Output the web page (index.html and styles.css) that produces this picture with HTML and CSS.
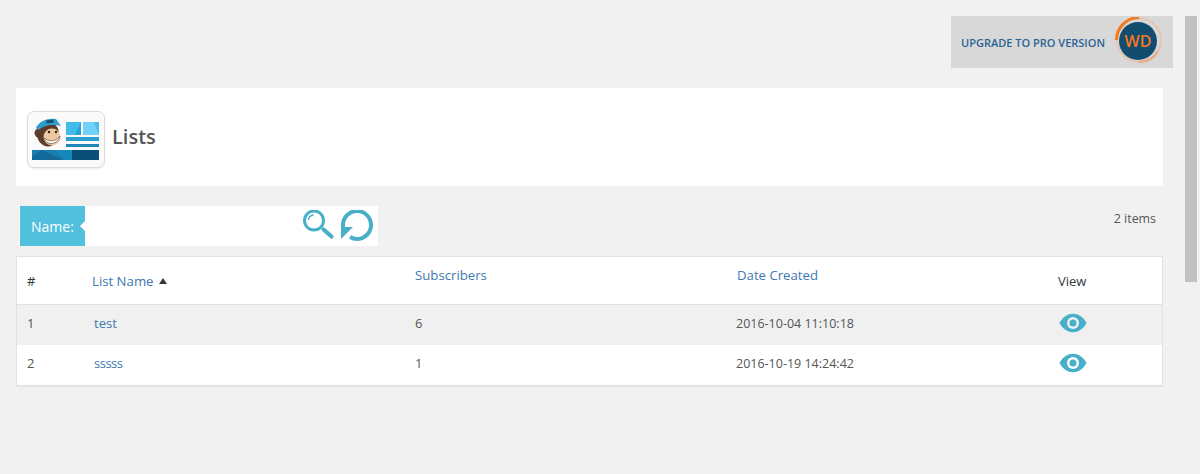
FILE: index.html
```html
<!DOCTYPE html>
<html lang="en">
<head>
<meta charset="utf-8">
<title>Lists</title>
<link rel="stylesheet" href="styles.css">
</head>
<body>
<div class="scroll-thumb"></div>
<main class="wrap">
  <div class="top">
    <a class="upgrade" href="#">
      <span class="upgrade-text">UPGRADE TO PRO VERSION</span>
      <span class="wd">
        <svg class="wd-ring" width="48" height="48" viewBox="0 0 48 48">
          <circle cx="25" cy="23" r="22" fill="none" stroke="#e5c5b2" stroke-width="2"/>
          <path d="M2.500 23A22.500 22.500 0 0 1 25 .5" fill="none" stroke="#f27a20" stroke-width="3"/>
          <path d="M25 45A22 22 0 0 0 44 34" fill="none" stroke="#e9a77f" stroke-width="2"/>
          <circle cx="24" cy="24" r="19" fill="#124c6e"/>
        </svg>
        <span class="wd-label">WD</span>
      </span>
    </a>
  </div>
  <header class="title-bar">
    <span class="logo">
      <svg width="76" height="55" viewBox="0 0 76 55">
        <rect x="4" y="38" width="67" height="10" fill="#1a7fb0"/>
        <path d="M44 38H71V48H44Z" fill="#0b4f78"/>
        <path d="M14 38L36 48H4V44Z" fill="#136a9a"/>
        <path d="M26 38H44V48H38Z" fill="#1689bb"/>
        <rect x="38" y="10" width="15" height="13" fill="#43bbe9"/>
        <path d="M53 10V23H47Z" fill="#2aa2d3"/>
        <rect x="55" y="10" width="16" height="13" fill="#71d1f7"/>
        <path d="M66 10H71V23Z" fill="#4fbde6"/>
        <rect x="38" y="25" width="33" height="4" fill="#2b9ed1"/>
        <rect x="38" y="32" width="33" height="3" fill="#1f86b8"/>
        <circle cx="11" cy="21" r="4.500" fill="#5d3c2b"/>
        <circle cx="11" cy="21" r="2" fill="#d9a97e"/>
        <ellipse cx="20" cy="22" rx="11" ry="12.500" fill="#5d3c2b"/>
        <ellipse cx="24" cy="25" rx="8.500" ry="8.500" fill="#ecc7a0"/>
        <path d="M16 26C21 30 28 30 32 24C31 32 19 35 16 26Z" fill="#fff" stroke="#5d3c2b" stroke-width=".6"/>
        <circle cx="21" cy="20" r="1.200" fill="#2c1c12"/>
        <circle cx="28" cy="20" r="1.200" fill="#2c1c12"/>
        <path d="M8 16C11 9 20 6 28 7L33 14C25 12 15 13 11 18Z" fill="#2f9ecf"/>
        <path d="M18 8.500L25 7.500L26 10.500L19 11.500Z" fill="#15506f"/>
      </svg>
    </span>
    <h1 class="title">Lists</h1>
  </header>
  <section class="tools">
    <form class="search">
      <label class="search-label">Name:</label>
      <span class="search-gap"></span>
      <svg class="ico-search" width="32" height="32" viewBox="0 0 32 32">
        <circle cx="11" cy="10.500" r="9.500" fill="none" stroke="#47afc9" stroke-width="3"/>
        <path d="M5.500 10A5.500 5.500 0 0 1 10.500 5" fill="none" stroke="#47afc9" stroke-width="1.400"/>
        <path d="M20.500 19.500L28.500 26.500" stroke="#47afc9" stroke-width="4.200" stroke-linecap="round"/>
      </svg>
      <svg class="ico-reset" width="33" height="32" viewBox="0 0 33 32">
        <path d="M2.200 17A14 14 0 1 1 9 27.100" fill="none" stroke="#47afc9" stroke-width="4"/>
        <path d="M0 17L12 17L0 29Z" fill="#47afc9"/>
      </svg>
    </form>
    <span class="count">2 items</span>
  </section>
  <table class="lists">
    <thead>
      <tr>
        <th class="c-num"><span class="th-plain">#</span></th>
        <th class="c-name"><a href="#">List Name</a><span class="sort"></span></th>
        <th class="c-subs"><a class="raised" href="#">Subscribers</a></th>
        <th class="c-date"><a class="raised nudge" href="#">Date Created</a></th>
        <th class="c-view"><span class="th-plain">View</span></th>
      </tr>
    </thead>
    <tbody>
      <tr class="alt">
        <td>1</td><td class="indent"><a href="#">test</a></td><td>6</td><td class="date">2016-10-04 11:10:18</td>
        <td><svg class="eye" width="28" height="20" viewBox="0 0 28 20"><path d="M.5 10C4 3.500 9 .8 14 .8S24 3.500 27.500 10C24 16.500 19 19.200 14 19.200S4 16.500 .5 10Z" fill="#47afc9"/><circle cx="14" cy="10" r="6" fill="#f0f0f0"/><circle cx="14" cy="10" r="3.500" fill="#47afc9"/></svg></td>
      </tr>
      <tr>
        <td>2</td><td class="indent"><a class="tight" href="#">sssss</a></td><td>1</td><td class="date">2016-10-19 14:24:42</td>
        <td><svg class="eye" width="28" height="20" viewBox="0 0 28 20"><path d="M.5 10C4 3.500 9 .8 14 .8S24 3.500 27.500 10C24 16.500 19 19.200 14 19.200S4 16.500 .5 10Z" fill="#47afc9"/><circle cx="14" cy="10" r="6" fill="#fff"/><circle cx="14" cy="10" r="3.500" fill="#47afc9"/></svg></td>
      </tr>
    </tbody>
  </table>
</main>
</body>
</html>
```

FILE: styles.css
```css
* { box-sizing: border-box; }
html, body { margin: 0; height: 474px; overflow: hidden; }
body {
  background: #f1f1f1;
  color: #444;
  font-family: "Open Sans", "Noto Sans", sans-serif;
  font-size: 13px;
  position: relative;
}
a { color: #3f78b0; text-decoration: none; }
.scroll-thumb {
  position: absolute;
  left: 1185px;
  top: 16px;
  width: 12px;
  height: 266px;
  background: #c1c1c1;
}
.wrap {
  width: 1163px;
  padding: 16px 0 0 16px;
}
.top {
  display: flex;
  justify-content: flex-end;
  margin-right: -10px;
}
.upgrade {
  display: flex;
  align-items: center;
  justify-content: space-between;
  width: 222px;
  height: 52px;
  padding: 0 10px;
  background: #d8d8d8;
}
.upgrade-text {
  color: #2a6496;
  font-size: 11px;
  font-weight: 600;
  white-space: nowrap;
}
.wd {
  position: relative;
  display: block;
  width: 48px;
  height: 48px;
  margin: -2px 1px 0 0;
}
.wd-ring { display: block; }
.wd-label {
  position: absolute;
  inset: 0;
  display: flex;
  align-items: center;
  justify-content: center;
  color: #f27a20;
  font-size: 16px;
  font-weight: 600;
}
.title-bar {
  display: flex;
  align-items: center;
  height: 98px;
  margin-top: 20px;
  padding-left: 11px;
  background: #fff;
}
.logo {
  display: block;
  width: 78px;
  height: 57px;
  margin-top: 4px;
  border: 1px solid #dcdcdc;
  border-radius: 7px;
  background: #fafafa;
  box-shadow: 0 1px 2px rgba(0, 0, 0, .08);
  overflow: hidden;
}
.logo svg { display: block; }
.title {
  margin: 0 0 0 7px;
  color: #555;
  font-size: 20px;
  font-weight: 600;
  line-height: 1;
}
.tools {
  display: flex;
  justify-content: space-between;
  align-items: flex-start;
  height: 50px;
  margin-top: 20px;
  padding: 0 7px 0 3px;
}
.count { padding-top: 4px; font-size: 12.4px; color: #555; }
.search {
  display: flex;
  align-items: center;
  width: 359px;
  height: 40px;
  padding-left: 1px;
  background: #fff;
}
.search-label {
  position: relative;
  display: flex;
  align-items: center;
  width: 65px;
  height: 40px;
  padding-left: 11px;
  background: #50c0dc;
  color: #fff;
  font-size: 14px;
}
.search-label::after {
  content: "";
  position: absolute;
  right: 0;
  top: 15px;
  border: 5px solid transparent;
  border-right-color: #fff;
  border-left-width: 0;
}
.search-gap { flex: 1; }
.ico-search { margin-right: 6px; }
.ico-reset { margin-right: 4px; }
.lists {
  width: 1147px;
  border-collapse: separate;
  border-spacing: 0;
  table-layout: fixed;
  background: #fff;
  border: 1px solid #e2e2e2;
  box-shadow: 0 1px 1px rgba(0, 0, 0, .04);
}
.lists th, .lists td {
  padding: 0 0 0 10px;
  text-align: left;
  font-weight: 400;
  font-size: 13px;
}
.lists th { height: 48px; border-bottom: 1px solid #e0e0e0; }
.lists td { height: 40px; padding-bottom: 4px; color: #555; }
.lists .alt { background: #f0f0f0; }
.c-num { width: 65px; }
.c-name { width: 323px; }
.c-subs { width: 321px; }
.c-date { width: 322px; }
.lists th a { font-size: 13.2px; }
.lists .date { font-size: 12.5px; }
.lists .th-plain { color: #32373c; }
.raised { position: relative; top: -6px; }
.nudge { margin-left: 1px; }
.tight { letter-spacing: -.5px; }
.sort {
  display: inline-block;
  margin-left: 5px;
  vertical-align: 2px;
  border: 4px solid transparent;
  border-top-width: 0;
  border-bottom: 6px solid #32373c;
}
.indent a { margin-left: 2px; }
.eye { display: block; margin-left: 1px; }
```
